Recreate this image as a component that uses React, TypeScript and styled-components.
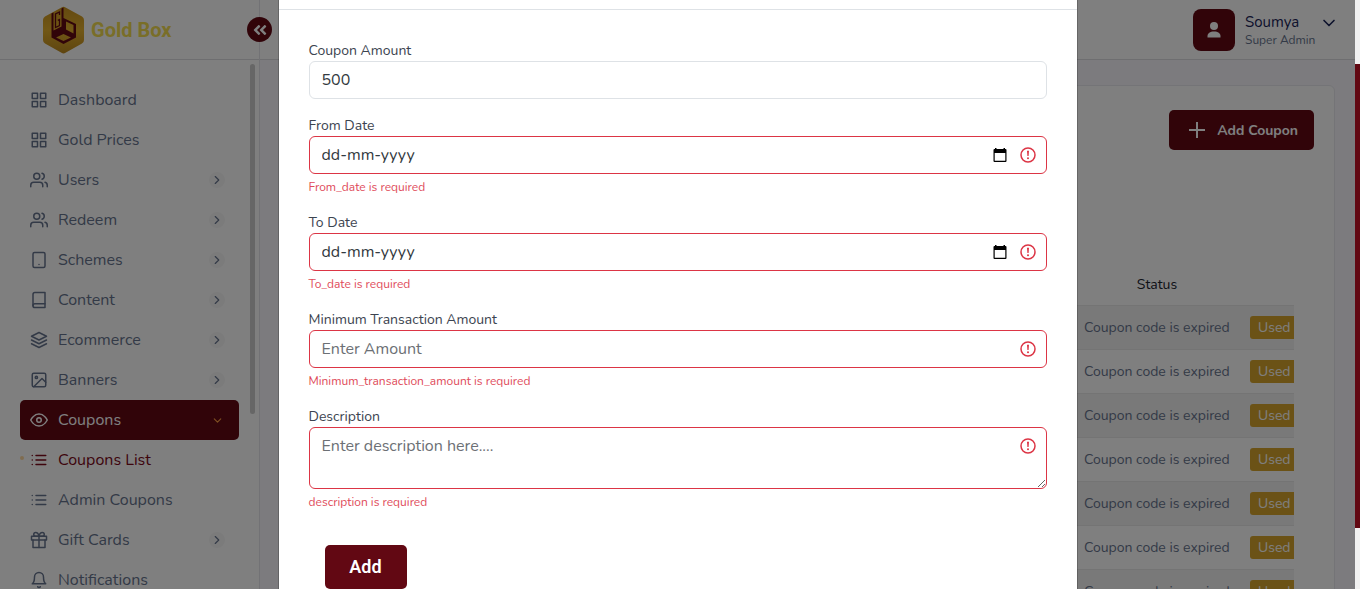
import React from "react";
import styled, { createGlobalStyle, css } from "styled-components";
import {
  FiBell,
  FiBook,
  FiChevronDown,
  FiChevronRight,
  FiEye,
  FiGift,
  FiGrid,
  FiImage,
  FiLayers,
  FiList,
  FiTablet,
  FiUsers,
} from "react-icons/fi";
import { FaAngleDoubleLeft } from "react-icons/fa";

const maroon = "#620813";
const danger = "#dc3545";
const bodyFont = `Nunito, Lato, "Noto Sans", sans-serif`;

const GlobalStyle = createGlobalStyle`
  *, *::before, *::after { box-sizing: border-box; }
  body {
    margin: 0;
    font-family: ${bodyFont};
    font-size: 14px;
    color: #333;
    background: #f8f7fc;
    overflow: hidden;
  }
  button, input, textarea { font-family: inherit; }
  a { text-decoration: none; color: inherit; }
`;

/* ---------- shell ---------- */

const Shell = styled.div`
  display: flex;
  height: 100vh;
  padding-right: 5px;
  overflow: hidden;
`;

const Sidebar = styled.aside`
  position: relative;
  flex: 0 0 260px;
  background: #fff;
  border-right: 1px solid #e4e4ea;
`;

const Brand = styled.a`
  display: flex;
  align-items: center;
  gap: 6px;
  height: 60px;
  padding-left: 42px;
  border-bottom: 1px solid #dcdce0;
  font: 700 20px/24px Roboto, sans-serif;
  color: #f3dc50;
`;

const CollapseButton = styled.button`
  position: absolute;
  top: 17px;
  right: -13px;
  display: flex;
  align-items: center;
  justify-content: center;
  width: 25px;
  height: 25px;
  padding: 0;
  border: 0;
  border-radius: 50%;
  background: ${maroon};
  color: #fff;
`;

const SidebarThumb = styled.div`
  position: absolute;
  top: 64px;
  right: 4px;
  width: 5px;
  height: 350px;
  border-radius: 5px;
  background: #ccc;
`;

const Menu = styled.ul`
  margin: 0;
  padding: 20px 20px 0;
  list-style: none;
`;

type ItemState = "plain" | "open" | "current";

const MenuLink = styled.a<{ $state: ItemState }>`
  position: relative;
  display: flex;
  align-items: center;
  gap: 10px;
  height: 40px;
  padding: 0 14px 0 10px;
  border-radius: 5px;
  font-size: 16px;
  line-height: 24px;
  color: #67748e;

  span {
    flex: 1;
  }

  ${({ $state }) =>
    $state === "open" &&
    css`
      background: ${maroon};
      color: #fff;
    `}

  ${({ $state }) =>
    $state === "current" &&
    css`
      color: #7c0a1a;
      &::before {
        content: "";
        position: absolute;
        left: 0;
        top: 16px;
        width: 4px;
        height: 4px;
        border-radius: 50%;
        background: #ffd9a0;
      }
    `}
`;

const Arrow = styled.i<{ $open?: boolean }>`
  display: flex;
  align-items: center;
  justify-content: center;
  width: 16px;
  height: 16px;
  border-radius: 50%;
  background: ${({ $open }) => ($open ? "transparent" : "#f7f7f7")};
  color: ${({ $open }) => ($open ? "#ff9f43" : "#67748e")};
`;

const Main = styled.main`
  flex: 1;
  min-width: 0;
`;

const Topbar = styled.header`
  display: flex;
  justify-content: flex-end;
  align-items: center;
  height: 60px;
  padding-right: 16px;
  background: #fff;
  border-bottom: 1px solid #dcdce0;
`;

const UserButton = styled.button`
  display: flex;
  align-items: center;
  gap: 10px;
  padding: 0;
  border: 0;
  background: none;
  text-align: left;
`;

const Avatar = styled.span`
  display: flex;
  align-items: center;
  justify-content: center;
  width: 42px;
  height: 42px;
  border-radius: 8px;
  background: ${maroon};
`;

const UserText = styled.span`
  display: flex;
  flex-direction: column;
  width: 71px;
`;

const UserName = styled.span`
  font-size: 15px;
  line-height: 20px;
  color: #1b2559;
`;

const UserRole = styled.span`
  font-size: 12px;
  line-height: 16px;
  white-space: nowrap;
  color: #67748e;
`;

const UserCaret = styled.span`
  display: flex;
  align-self: flex-start;
  margin: 4px 0 0 -7px;
  color: #1b2559;
`;

const Card = styled.section`
  margin: 25px 20px;
  padding: 24px 20px;
  border: 1px solid #e9e9ee;
  border-radius: 6px;
  background: #fff;
`;

const CardActions = styled.div`
  display: flex;
  justify-content: flex-end;
  margin-bottom: 114px;
`;

const AddCouponButton = styled.button`
  display: flex;
  align-items: center;
  justify-content: space-between;
  width: 145px;
  height: 40px;
  padding: 0 16px 0 20px;
  border: 0;
  border-radius: 5px;
  background: ${maroon};
  color: #fff;
  font-size: 14px;
  font-weight: 700;
  line-height: 21px;
`;

const TableClip = styled.div`
  margin-right: 20px;
  overflow: hidden;
`;

const CouponTable = styled.table`
  width: calc(100% + 16px);
  border-collapse: collapse;
  table-layout: fixed;
  font-size: 14px;
  line-height: 21px;

  th {
    height: 41px;
    padding: 0 10px;
    font-weight: 400;
    color: #1b2530;
    border-bottom: 1px solid #e8e8e8;
  }
  td {
    height: 44px;
    padding: 0 10px;
    white-space: nowrap;
    color: #67748e;
    border-bottom: 1px solid #e8e8e8;
  }
  tbody tr:nth-child(odd) {
    background: #f2f2f2;
  }
`;

const StatusColumn = styled.col`
  width: 166px;
`;

const UsageColumn = styled.col`
  width: 70px;
`;

const UsedBadge = styled.span`
  display: block;
  width: 50px;
  padding: 0 8px;
  border-radius: 3px;
  background: #d6a42c;
  color: #fff;
  line-height: 23px;
`;

/* ---------- modal ---------- */

const Backdrop = styled.div`
  position: fixed;
  inset: 0 5px 0 0;
  display: flex;
  justify-content: center;
  align-items: flex-start;
  overflow: hidden;
  background: rgba(0, 0, 0, 0.5);
`;

const Dialog = styled.div`
  flex: 0 1 800px;
  min-height: 100vh;
  background: #fff;
  border: solid rgba(0, 0, 0, 0.2);
  border-width: 0 1px;
  background-clip: padding-box;
`;

const DialogHeader = styled.header`
  height: 10px;
  border-bottom: 1px solid #dee2e6;
`;

const CouponForm = styled.form`
  display: flex;
  flex-direction: column;
  gap: 16px;
  padding: 30px;
`;

const Field = styled.div`
  display: flex;
  flex-direction: column;
`;

const Label = styled.label`
  font-size: 14px;
  line-height: 21px;
  color: #3c4450;
`;

const ControlWrap = styled.div`
  position: relative;
  display: flex;
`;

const controlStyle = css<{ $invalid?: boolean }>`
  width: 100%;
  padding: 6px 12px;
  border: 1px solid ${({ $invalid }) => ($invalid ? danger : "#dee2e6")};
  border-radius: 6px;
  background: #fff;
  color: #333a40;
  font-size: 16px;
  line-height: 24px;
  outline: none;
`;

const TextInput = styled.input<{ $invalid?: boolean; $date?: boolean }>`
  ${controlStyle}
  height: 38px;
  &::placeholder {
    color: ${({ $date }) => ($date ? "#333a40" : "#6c7075")};
    opacity: 1;
  }
`;

const TextArea = styled.textarea<{ $invalid?: boolean }>`
  ${controlStyle}
  height: 62px;
  resize: vertical;
  &::placeholder {
    color: #6c7075;
    opacity: 1;
  }
`;

const Adornments = styled.div`
  position: absolute;
  top: 11px;
  right: 11px;
  display: flex;
  align-items: center;
  gap: 13px;
`;

const PickerButton = styled.button`
  display: flex;
  padding: 0;
  border: 0;
  background: none;
  color: #000;
`;

const ErrorText = styled.p`
  margin: 4px 0 0;
  font-size: 12px;
  line-height: 18px;
  color: #e04b5a;
`;

const SubmitButton = styled.button`
  align-self: flex-start;
  margin: 18px 16px 0;
  height: 44px;
  width: 82px;
  border: 0;
  border-radius: 5px;
  background: ${maroon};
  color: #fff;
  font: 600 18px/24px Roboto, sans-serif;
`;

const ScrollTrack = styled.div`
  position: fixed;
  inset: 0 0 0 auto;
  width: 5px;
  display: grid;
  grid-template-rows: 64fr 464fr 61fr;
  background: #f1f1f1;
`;

const ScrollThumb = styled.div`
  grid-row: 2;
  background: ${maroon};
`;

/* ---------- drawings ---------- */

const LogoMark = () => (
  <svg width="43" height="48" viewBox="0 0 43 48" aria-hidden="true">
    <defs>
      <linearGradient id="gold" x1="0" y1="0" x2="0" y2="1">
        <stop offset="0" stopColor="#c9931f" />
        <stop offset="0.5" stopColor="#e3af2c" />
        <stop offset="1" stopColor="#bd8a20" />
      </linearGradient>
    </defs>
    <path
      d="M19.5 1.4 Q21.5 .2 23.500 1.400 L40 10.500 Q42 11.700 42 14 V34 Q42 36.300 40 37.500 L23.500 46.800 Q21.500 48 19.500 46.800 L3 37.500 Q1 36.300 1 34 V14 Q1 11.700 3 10.500Z"
      fill="url(#gold)"
    />
    <path
      fill={maroon}
      fillRule="evenodd"
      d="M9.500 7.500 L11.500 6.500 V24.500 L19.500 20.500 V2.500 L21.500 1.500 V12 L34 18 V31.500 L21.500 38 L9.500 31.500Z M24 15.500 V23.500 L31.500 27.500 V19Z M21.500 28 L14 31.500 L21.500 35 L29 31.500Z"
    />
    <path
      d="M17.500 9 V6 L13.500 8 V21.500 L17.500 19.500 V13.500 L15.800 14.300"
      fill="none"
      stroke={maroon}
      strokeWidth="1.300"
    />
  </svg>
);

const PersonIcon = () => (
  <svg width="14" height="16" viewBox="0 0 14 16" fill="#fff" aria-hidden="true">
    <circle cx="7" cy="4" r="4" />
    <path d="M.5 15.500 V14 C.5 11.300 3 9.500 7 9.500 S13.500 11.300 13.500 14 V15.500Z" />
  </svg>
);

const PlusIcon = () => (
  <svg width="16" height="16" viewBox="0 0 16 16" stroke="#fff" strokeWidth="2" aria-hidden="true">
    <path d="M8 0V16M0 8H16" />
  </svg>
);

const CalendarIcon = () => (
  <svg width="14" height="14" viewBox="0 0 14 14" fill="currentColor" aria-hidden="true">
    <path
      fillRule="evenodd"
      d="M2 0H3.500V1H10.500V0H12V1H12.500Q13.500 1 13.500 2V13Q13.500 14 12.500 14H1.500Q.5 14 .5 13V2Q.5 1 1.500 1H2Z M1.700 5V12.800H12.300V5Z"
    />
  </svg>
);

const AlertIcon = () => (
  <svg width="16" height="16" viewBox="0 0 16 16" aria-hidden="true">
    <circle cx="8" cy="8" r="7" fill="none" stroke={danger} strokeWidth="1.500" />
    <path d="M7 3.800H9L8.600 9H7.400Z" fill={danger} />
    <circle cx="8" cy="11.200" r="1" fill={danger} />
  </svg>
);

/* ---------- content ---------- */

interface MenuEntry {
  label: string;
  Icon: React.ComponentType<{ size?: number }>;
  arrow?: boolean;
  state?: ItemState;
}

const menu: MenuEntry[] = [
  { label: "Dashboard", Icon: FiGrid },
  { label: "Gold Prices", Icon: FiGrid },
  { label: "Users", Icon: FiUsers, arrow: true },
  { label: "Redeem", Icon: FiUsers, arrow: true },
  { label: "Schemes", Icon: FiTablet, arrow: true },
  { label: "Content", Icon: FiBook, arrow: true },
  { label: "Ecommerce", Icon: FiLayers, arrow: true },
  { label: "Banners", Icon: FiImage, arrow: true },
  { label: "Coupons", Icon: FiEye, arrow: true, state: "open" },
  { label: "Coupons List", Icon: FiList, state: "current" },
  { label: "Admin Coupons", Icon: FiList },
  { label: "Gift Cards", Icon: FiGift, arrow: true },
  { label: "Notifications", Icon: FiBell },
];

interface FieldProps {
  id: string;
  label: string;
  error?: string;
  placeholder?: string;
  value?: string;
  kind?: "text" | "date" | "area";
}

const FormField = ({ id, label, error, placeholder, value, kind = "text" }: FieldProps) => (
  <Field>
    <Label htmlFor={id}>{label}</Label>
    <ControlWrap>
      {kind === "area" ? (
        <TextArea id={id} placeholder={placeholder} $invalid={!!error} />
      ) : (
        <TextInput
          id={id}
          type="text"
          placeholder={placeholder}
          defaultValue={value}
          $invalid={!!error}
          $date={kind === "date"}
        />
      )}
      {error && (
        <Adornments>
          {kind === "date" && (
            <PickerButton type="button" aria-label={`Pick ${label}`}>
              <CalendarIcon />
            </PickerButton>
          )}
          <AlertIcon />
        </Adornments>
      )}
    </ControlWrap>
    {error && <ErrorText>{error}</ErrorText>}
  </Field>
);

export default function App() {
  return (
    <>
      <GlobalStyle />
      <Shell>
        <Sidebar>
          <Brand href="#home">
            <LogoMark />
            Gold Box
          </Brand>
          <CollapseButton type="button" aria-label="Collapse menu">
            <FaAngleDoubleLeft size={16} />
          </CollapseButton>
          <nav>
            <Menu>
              {menu.map(({ label, Icon, arrow, state = "plain" }) => (
                <li key={label}>
                  <MenuLink href="#menu" $state={state}>
                    <Icon size={18} />
                    <span>{label}</span>
                    {arrow && (
                      <Arrow $open={state === "open"}>
                        {state === "open" ? <FiChevronDown size={13} /> : <FiChevronRight size={14} />}
                      </Arrow>
                    )}
                  </MenuLink>
                </li>
              ))}
            </Menu>
          </nav>
          <SidebarThumb />
        </Sidebar>
        <Main>
          <Topbar>
            <UserButton type="button">
              <Avatar>
                <PersonIcon />
              </Avatar>
              <UserText>
                <UserName>Soumya</UserName>
                <UserRole>Super Admin</UserRole>
              </UserText>
              <UserCaret>
                <FiChevronDown size={20} />
              </UserCaret>
            </UserButton>
          </Topbar>
          <Card>
            <CardActions>
              <AddCouponButton type="button">
                <PlusIcon />
                Add Coupon
              </AddCouponButton>
            </CardActions>
            <TableClip>
              <CouponTable>
                <colgroup>
                  <col />
                  <StatusColumn />
                  <UsageColumn />
                </colgroup>
                <thead>
                  <tr>
                    <th />
                    <th scope="col">Status</th>
                    <th />
                  </tr>
                </thead>
                <tbody>
                  {Array.from({ length: 7 }, (_, row) => (
                    <tr key={row}>
                      <td />
                      <td>Coupon code is expired</td>
                      <td>
                        <UsedBadge>Used</UsedBadge>
                      </td>
                    </tr>
                  ))}
                </tbody>
              </CouponTable>
            </TableClip>
          </Card>
        </Main>
      </Shell>
      <Backdrop>
        <Dialog role="dialog" aria-modal="true" aria-label="Add coupon">
          <DialogHeader />
          <CouponForm>
            <FormField id="amount" label="Coupon Amount" value="500" />
            <FormField id="from" label="From Date" kind="date" placeholder="dd-mm-yyyy" error="From_date is required" />
            <FormField id="to" label="To Date" kind="date" placeholder="dd-mm-yyyy" error="To_date is required" />
            <FormField
              id="minimum"
              label="Minimum Transaction Amount"
              placeholder="Enter Amount"
              error="Minimum_transaction_amount is required"
            />
            <FormField
              id="description"
              label="Description"
              kind="area"
              placeholder="Enter description here...."
              error="description is required"
            />
            <SubmitButton type="button">Add</SubmitButton>
          </CouponForm>
        </Dialog>
      </Backdrop>
      <ScrollTrack>
        <ScrollThumb />
      </ScrollTrack>
    </>
  );
}
